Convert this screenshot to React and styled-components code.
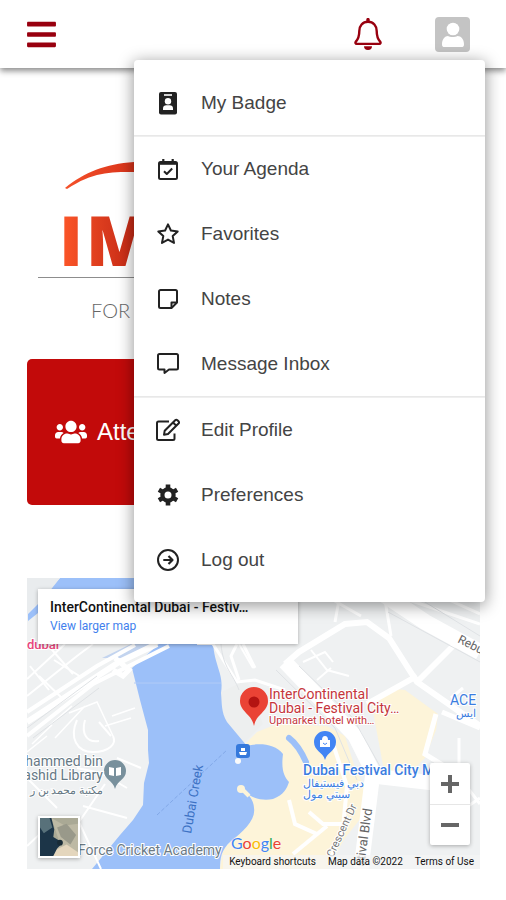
import styled, { createGlobalStyle } from "styled-components";
import { FaBars, FaUsers } from "react-icons/fa";

const BadgeIcon = () => (
  <Glyph viewBox="0 0 24 24">
    <path
      d="M5 1H19A2 2 0 0 1 21 3V21.500A2 2 0 0 1 19 23.500H5A2 2 0 0 1 3 21.500V3A2 2 0 0 1 5 1Z"
      fill="currentColor"
      stroke="none"
    />
    <path d="M8 4H16" stroke="#fff" strokeWidth="1.600" />
    <circle cx="12" cy="10.300" r="3.200" fill="#fff" stroke="none" />
    <path d="M7 19V17.200C7 15.400 8.500 14.200 10.200 14.200H13.800C15.500 14.200 17 15.400 17 17.200V19Z" fill="#fff" stroke="none" />
  </Glyph>
);

const AgendaIcon = () => (
  <Glyph viewBox="0 0 24 24">
    <rect x="3" y="5" width="18" height="17" rx="1.500" />
    <path d="M3 6.500H21" strokeWidth="2.600" />
    <path d="M7.300 2V6M16.700 2V6" strokeWidth="2.200" />
    <path d="M8 14.200L10.800 17L16.200 11.500" />
  </Glyph>
);

const StarIcon = () => (
  <Glyph viewBox="0 0 24 24">
    <path d="M12 2.300L14.900 8.500L21.700 9.400L16.700 14.100L18 20.900L12 17.600L6 20.900L7.300 14.100L2.300 9.400L9.100 8.500Z" />
  </Glyph>
);

const NotesIcon = () => (
  <Glyph viewBox="0 0 24 24">
    <path d="M21 15.500L15.500 21H4.500A1.500 1.500 0 0 1 3 19.500V4.500A1.500 1.500 0 0 1 4.500 3H19.500A1.500 1.500 0 0 1 21 4.500Z" />
    <path d="M15.500 21V15.500H21" />
  </Glyph>
);

const InboxIcon = () => (
  <Glyph viewBox="0 0 24 24">
    <path d="M3.500 2H20.500A1.500 1.500 0 0 1 22 3.500V16A1.500 1.500 0 0 1 20.500 17.500H13L8.500 21V17.500H3.500A1.500 1.500 0 0 1 2 16V3.500A1.500 1.500 0 0 1 3.500 2Z" />
  </Glyph>
);

const EditIcon = () => (
  <Glyph viewBox="0 0 24 24">
    <path d="M13 3.500H2.500A1.500 1.500 0 0 0 1 5V20.500A1.500 1.500 0 0 0 2.500 22H17A1.500 1.500 0 0 0 18.500 20.500V15.500" />
    <path d="M19.200 2.200A1.600 1.600 0 0 1 21.400 2.200L22.500 3.300A1.600 1.600 0 0 1 22.500 5.500L12 16L8 16.800L8.700 12.700ZM17 4.500L20.300 7.800" />
  </Glyph>
);

const GearIcon = () => (
  <Glyph viewBox="0 0 24 24">
    <circle cx="12" cy="12" r="5.600" strokeWidth="4.200" />
    <path
      d="M12 5V1.500M12 19V22.500M18.100 8.500L21.100 6.800M5.900 15.500L2.900 17.200M18.100 15.500L21.100 17.200M5.900 8.500L2.900 6.800"
      strokeWidth="4.600"
      strokeLinecap="butt"
    />
  </Glyph>
);

const LogoutIcon = () => (
  <Glyph viewBox="0 0 24 24">
    <circle cx="12" cy="12" r="10" />
    <path d="M7.300 12H16.300M12.500 8L16.500 12L12.500 16" strokeWidth="2.200" />
  </Glyph>
);

const BellIcon = () => (
  <svg viewBox="0 0 28 32" width="28" height="32" aria-hidden="true">
    <path
      d="M14 3.800C8.500 3.800 5.300 8 5.300 13C5.300 19.500 3.800 21.500 1.900 23.600C1 24.700 1.500 25.900 2.700 25.900H25.300C26.500 25.900 27 24.700 26.100 23.600C24.200 21.500 22.700 19.500 22.700 13C22.700 8 19.500 3.800 14 3.800Z"
      fill="none"
      stroke="currentColor"
      strokeWidth="2.400"
    />
    <path d="M12.300 4V1.600A1.700 1.700 0 0 1 15.700 1.600V4Z" fill="currentColor" />
    <path d="M10 28.300H18A4 3.700 0 0 1 10 28.300Z" fill="currentColor" />
  </svg>
);

const menuGroups = [
  [{ label: "My Badge", icon: <BadgeIcon /> }],
  [
    { label: "Your Agenda", icon: <AgendaIcon /> },
    { label: "Favorites", icon: <StarIcon /> },
    { label: "Notes", icon: <NotesIcon /> },
    { label: "Message Inbox", icon: <InboxIcon /> },
  ],
  [
    { label: "Edit Profile", icon: <EditIcon /> },
    { label: "Preferences", icon: <GearIcon /> },
    { label: "Log out", icon: <LogoutIcon /> },
  ],
];

const App = () => {
  return (
    <Page>
      <GlobalStyle />
      <Header>
        <IconButton aria-label="Open navigation">
          <FaBars size={33} />
        </IconButton>
        <Actions>
          <IconButton aria-label="Notifications">
            <BellIcon />
          </IconButton>
          <IconButton aria-label="Account" aria-expanded="true">
            <Avatar />
          </IconButton>
        </Actions>
        <Menu aria-label="Account">
          {menuGroups.map((group) => (
            <Group key={group[0].label}>
              {group.map((item) => (
                <li key={item.label}>
                  <MenuItem>
                    {item.icon}
                    {item.label}
                  </MenuItem>
                </li>
              ))}
            </Group>
          ))}
        </Menu>
      </Header>
      <Main>
        <Logo />
        <Card href="#attendees">
          <FaUsers size={32} />
          Attendees
        </Card>
        <VenueMap />
      </Main>
    </Page>
  );
};

export default App;

const Avatar = () => (
  <svg viewBox="0 0 35 35" width="35" height="35" aria-hidden="true">
    <rect width="35" height="35" rx="4" fill="#c4c4c4" />
    <circle cx="18" cy="12" r="6.300" fill="#fff" />
    <path
      d="M7 27.500C7 22 10 19 13 19C15 20.300 20 20.300 22.500 19C26 19 29 22 29 27.500C29 29.500 28 30 26.500 30H9.500C8 30 7 29.500 7 27.500Z"
      fill="#fff"
    />
  </svg>
);

const Logo = () => (
  <LogoArt viewBox="0 0 453 175" role="img" aria-label="Event logo">
    <defs>
      <linearGradient id="arc" x1="39" x2="107" y1="0" y2="0" gradientUnits="userSpaceOnUse">
        <stop offset="0" stopColor="#f4512a" />
        <stop offset="1" stopColor="#d9331a" />
      </linearGradient>
      <linearGradient id="ink" x1="36" x2="120" y1="0" y2="0" gradientUnits="userSpaceOnUse">
        <stop offset="0" stopColor="#fb5528" />
        <stop offset="0.5" stopColor="#d93a1d" />
        <stop offset="1" stopColor="#bf2413" />
      </linearGradient>
    </defs>
    <path d="M38 38C58 22 78 14 107 12L130 12V22H107C82 22 66 22 40 39Z" fill="url(#arc)" />
    <LogoName y="116">
      <tspan x="32">I</tspan>
      <tspan x="59">M</tspan>
    </LogoName>
    <path d="M11 127.500H140" stroke="#8d8d8d" />
    <LogoTag x="64" y="168">FOR</LogoTag>
  </LogoArt>
);

const VenueMap = () => (
  <MapFrame>
    <MapArt viewBox="0 0 453 291" preserveAspectRatio="xMinYMin slice" aria-hidden="true">
      <rect width="453" height="291" fill="#eff1f2" />

      {/* festival district */}
      <path
        d="M216 168L230 154L250 146L300 148L318 158L328 190L340 214L334 240L318 260L300 291H193L196 272L226 240L218 214Z"
        fill="#fdf4d9"
      />
      <path d="M345 128L367 111L378 112L411 136L409 152L398 180L384 194L358 198Z" fill="#fdf4d9" />
      <path d="M186 118L220 102L236 146L216 166L200 144Z" fill="#edefef" />

      {/* creek */}
      <path
        d="M133 65L105 90L113 122L121 152V172L122 185L117 205L116 227L106 242L93 257L65 291H193C193 280 194 272 204 263C216 254 229 242 227 230C227 222 220 214 215 211C224 221 236 223 246 221C257 217 260 210 262 204C257 198 254 192 256 176C248 165 230 165 220 168L200 144C194 134 195 125 194 115C197 95 188 90 186 65Z"
        fill="#9cc0f9"
      />
      <path d="M33 0H453V12H22ZM11 26V35L1 43V36Z" fill="#9cc0f9" />
      <path d="M22 14L0 36V0H33Z" fill="#e9ecee" />
      <path d="M262 160C270 166 275 175 279 184" stroke="#9cc0f9" strokeWidth="6" strokeLinecap="round" fill="none" />
      <path d="M107 105H194" stroke="#b1cbf7" fill="none" />
      <path d="M130 237L200 172" stroke="#82a8e8" strokeDasharray="4 2" />
      <path d="M215 211L222 218" stroke="#fdf4d9" strokeWidth="4" />
      <circle cx="211" cy="183" r="3" fill="#fafafa" />
      <circle cx="214" cy="211" r="4" fill="#fdf4d9" />
      <path d="M123 66L97 80L75 80L104 66Z" fill="#c3d4ef" />

      {/* west bank streets */}
      <g fill="none" stroke="#fff">
        <path d="M0 144L92 84L130 66" strokeWidth="6" />
        <path d="M0 158L66 106L142 68" strokeWidth="4" />
        <path d="M0 134L70 88L108 67" strokeWidth="4" />
        <path d="M0 118L50 78L66 66M12 98L36 121M3 88L22 112M27 82L54 99M20 66L46 96M0 101L38 66" strokeWidth="2" />
        <path d="M42 135L70 124L86 158M28 160L58 128M85 138L108 130M78 148L104 140M22 148L45 128M5 166L25 147M0 174L20 158" strokeWidth="1.500" />
        <path d="M50 142C42 160 50 174 66 174C82 174 90 166 86 158M58 142C54 156 60 165 72 163M72 144L84 158" strokeWidth="2" />
        <path d="M50 190L74 195L100 210M78 206L52 244L74 291M56 228L100 240M0 268L30 240M0 200L30 230M90 180L114 190" strokeWidth="2" />
        <path d="M88 80L102 92L96 98L86 92" strokeWidth="5" />
      </g>

      {/* east bank streets */}
      <g fill="none" stroke="#fff">
        <path d="M186 66L210 104L228 102L258 112M210 66L204 78L212 102M216 66L228 90" strokeWidth="3" />
        <path d="M258 86L272 74L318 46L340 44L362 60L390 104L453 148" strokeWidth="6" />
        <path d="M258 84L300 128L328 158L346 194L334 291" strokeWidth="15" />
        <path d="M306 22L334 38M358 22L364 58M312 22L308 44" strokeWidth="3" />
        <path d="M350 12L398 44L453 74" strokeWidth="16" />
        <path d="M376 20L453 46M400 12L453 36" strokeWidth="3" />
        <path d="M390 104L436 58M340 126L390 98" strokeWidth="6" />
        <path d="M346 198L416 206" strokeWidth="15" />
        <path d="M409 136L398 176L430 196M453 150L415 134" strokeWidth="5" />
        <path d="M284 72L300 92L322 98M276 84L298 74L306 84M304 90L290 102" strokeWidth="2" />
        <path d="M262 222L268 246L290 256M282 234L296 246L318 246M266 276L300 248M304 160L320 208L316 250L304 280" strokeWidth="4" />
        <path d="M436 110L424 120M430 196L453 226M424 240L453 220M432 160V190" strokeWidth="3" />
        <path d="M212 66L226 90M170 66L186 66" strokeWidth="2" />
      </g>
      <g fill="none" stroke="#dfe2e5">
        <path d="M249 92L308 150L330 202M272 88L326 140L354 190M361 34L453 84M372 8L453 58" />
        <path d="M194 66C196 90 206 96 212 112M0 150L70 98M6 160L72 110" />
      </g>

      <g transform="translate(227 148)" fill="#ea4335">
        <path d="M0 0C-2 -12 -14 -14 -14 -25A14 14 0 0 1 14 -25C14 -14 2 -12 0 0Z" />
        <circle cy="-24" r="5.500" fill="#b31412" />
      </g>
      <g transform="translate(298 182)" fill="#4285f4">
        <path d="M0 0C-2 -8 -11 -9 -11 -18A11 11 0 0 1 11 -18C11 -9 2 -8 0 0Z" />
        <path d="M-5 -20H5V-13H-5ZM-3 -20A3 4 0 0 1 3 -20Z" fill="#fff" />
        <path d="M-2 -17Q0 -14 2 -17" stroke="#4285f4" fill="none" />
      </g>
      <g transform="translate(88 211)" fill="#78909c">
        <path d="M0 0C-2 -9 -11 -9 -11 -18A11 11 0 0 1 11 -18C11 -9 2 -9 0 0Z" />
        <path d="M-6 -22L-1 -21V-13L-6 -14ZM6 -22L1 -21V-13L6 -14Z" fill="#fff" />
      </g>
      <g transform="translate(209 166)">
        <rect width="14" height="14" rx="3" fill="#3579dc" />
        <path d="M3 8H11L10 11H4ZM5 4H9V7H5Z" fill="#fff" />
      </g>

      <Label x="242" y="121" $color="#c5363c" $size={14}>InterContinental</Label>
      <Label x="242" y="135" $color="#c5363c" $size={14}>Dubai - Festival City…</Label>
      <Label x="242" y="146" $color="#c5363c" $size={11}>Upmarket hotel with…</Label>
      <Label x="276" y="197" $color="#3b7de0" $size={14} $weight={500}>Dubai Festival City M</Label>
      <Label x="276" y="209" $color="#3b7de0" $size={11}>دبي فيستيفال</Label>
      <Label x="276" y="220" $color="#3b7de0" $size={11}>سيتي مول</Label>
      <Label x="423" y="127" $color="#3b7de0" $size={14}>ACE</Label>
      <Label x="429" y="139" $color="#3b7de0" $size={11}>ايس</Label>
      <Label x="76" y="188" textAnchor="end" $color="#667985" $size={14}>hammed bin</Label>
      <Label x="76" y="202" textAnchor="end" $color="#667985" $size={14}>ashid Library</Label>
      <Label x="3" y="216" $color="#667985" $size={11}>مكتبة محمد بن ر</Label>
      <Label x="0" y="71" $color="#e8467c" $weight={500}>dubai</Label>
      <Label x="51" y="277" $color="#6b7a85" $size={14}>Force Cricket Academy</Label>
      <Label transform="translate(164 256) rotate(-80)" $color="#3c72c4" $plain>Dubai Creek</Label>
      <Label transform="translate(430 64) rotate(27)" $color="#666" $size={12}>Rebu</Label>
      <Label transform="translate(306 280) rotate(-65)" $color="#777" $size={11}>Crescent Dr</Label>
      <Label transform="translate(337 289) rotate(-82)" $color="#666">stival Blvd</Label>
    </MapArt>
    <PlaceCard>
      <PlaceName>InterContinental Dubai - Festiv…</PlaceName>
      <PlaceLink href="#map">View larger map</PlaceLink>
    </PlaceCard>
    <Satellite aria-label="Show satellite imagery">
      <svg viewBox="0 0 40 40" width="100%" height="100%">
        <rect width="40" height="40" fill="#aaa995" />
        <path d="M12 0L26 8L40 6V40H14L20 24Z" fill="#bdb9a4" />
        <path d="M18 10L28 6L38 18L32 28L22 20Z" fill="#99998a" />
        <path d="M16 34L28 28L40 36V40H12Z" fill="#e4d6bd" />
        <path d="M0 0H12L15 12L14 20L24 26L18 32L14 40H0Z" fill="#1c3548" />
        <path d="M0 0H10L13 10L4 16L0 10Z" fill="#58717a" />
        <circle cx="21" cy="26" r="3" fill="#182b36" />
      </svg>
    </Satellite>
    <Zoom>
      <ZoomButton aria-label="Zoom in">
        <svg viewBox="0 0 18 18" width="18" height="18">
          <path d="M0 9H18M9 0V18" stroke="#666" strokeWidth="4" />
        </svg>
      </ZoomButton>
      <ZoomButton aria-label="Zoom out">
        <svg viewBox="0 0 18 18" width="18" height="18">
          <path d="M0 9H18" stroke="#666" strokeWidth="4" />
        </svg>
      </ZoomButton>
    </Zoom>
    <Google href="#google" aria-label="Google">
      <Letter $color="#4285f4">G</Letter>
      <Letter $color="#ea4335">o</Letter>
      <Letter $color="#fbbc05">o</Letter>
      <Letter $color="#4285f4">g</Letter>
      <Letter $color="#34a853">l</Letter>
      <Letter $color="#ea4335">e</Letter>
    </Google>
    <Credits>
      <CreditButton>Keyboard shortcuts</CreditButton>
      <span>Map data ©2022</span>
      <CreditLink href="#terms">Terms of Use</CreditLink>
    </Credits>
  </MapFrame>
);

const GlobalStyle = createGlobalStyle`
  * {
    box-sizing: border-box;
  }

  body {
    margin: 0;
    background-color: #fff;
    font-family: "Liberation Sans", Arial, sans-serif;
  }

  button {
    padding: 0;
    border: 0;
    background: none;
    font: inherit;
    cursor: pointer;
  }

  svg {
    display: block;
  }
`;

const Page = styled.div`
  overflow-x: hidden;
`;

const Header = styled.header`
  position: relative;
  z-index: 1;
  display: flex;
  align-items: center;
  justify-content: space-between;
  height: 68px;
  padding: 0 36px 0 25px;
  background-color: #fff;
  box-shadow: 0 3px 6px rgba(0, 0, 0, 0.45);
`;

const Actions = styled.div`
  display: flex;
  align-items: center;
  gap: 53px;
`;

const IconButton = styled.button`
  color: #98000f;
`;

const Menu = styled.nav`
  position: absolute;
  top: 60px;
  right: 21px;
  left: 134px;
  padding: 10px 0;
  border-radius: 4px;
  background-color: #fff;
  box-shadow: 0 3px 16px 1px rgba(0, 0, 0, 0.4);
`;

const Group = styled.ul`
  margin: 0;
  padding: 0;
  list-style: none;

  &:not(:last-child) {
    border-bottom: 1px solid #e8e8e8;
    box-shadow: 0 1px #efefef;
  }
`;

const MenuItem = styled.button`
  display: flex;
  align-items: center;
  gap: 21px;
  width: 100%;
  height: 65px;
  padding: 0 22px;
  color: #444;
  font-size: 19px;
  text-align: left;
`;

const Glyph = styled.svg`
  flex-shrink: 0;
  width: 24px;
  height: 24px;
  color: #222;
  fill: none;
  stroke: currentColor;
  stroke-width: 2px;
  stroke-linejoin: round;
`;

const Main = styled.main`
  display: flex;
  flex-direction: column;
  padding: 82px 26px 20px 27px;
`;

const LogoArt = styled.svg`
  width: 100%;
`;

const LogoName = styled.text`
  fill: url(#ink);
  font-family: "Open Sans", sans-serif;
  font-size: 69px;
  font-weight: 800;
`;

const LogoTag = styled.text`
  fill: #666;
  font-family: Lato, sans-serif;
  font-size: 20px;
  font-weight: 300;
`;

const Card = styled.a`
  display: flex;
  align-items: center;
  gap: 10px;
  height: 146px;
  margin: 34px 0 73px;
  padding: 0 28px;
  border-radius: 5px;
  background-color: #c20a0a;
  color: #fff;
  font-size: 24px;
  text-decoration: none;
`;

const MapFrame = styled.section`
  position: relative;
  height: 291px;
  overflow: hidden;
  font-family: Roboto, sans-serif;
`;

const MapArt = styled.svg`
  width: 100%;
  height: 100%;
`;

const Label = styled.text`
  fill: ${(props) => props.$color};
  stroke: ${(props) => (props.$plain ? "none" : "#fff")};
  stroke-width: 2px;
  paint-order: stroke;
  font-size: ${(props) => props.$size || 13}px;
  font-weight: ${(props) => props.$weight || 400};
`;

const PlaceCard = styled.div`
  position: absolute;
  top: 11px;
  left: 11px;
  width: 260px;
  padding: 9px 12px 8px;
  background-color: #fff;
  box-shadow: 0 1px 4px rgba(0, 0, 0, 0.3);
`;

const PlaceName = styled.p`
  margin: 0;
  color: #111;
  font-size: 14px;
  font-weight: 500;
  line-height: 18px;
  white-space: nowrap;
`;

const PlaceLink = styled.a`
  display: block;
  color: #427fed;
  font-size: 12px;
  line-height: 20px;
  text-decoration: none;
`;

const Satellite = styled.button`
  position: absolute;
  bottom: 11px;
  left: 11px;
  width: 42px;
  height: 42px;
  border: 2px solid #fff;
  box-shadow: 0 1px 4px rgba(0, 0, 0, 0.3);
`;

const Zoom = styled.div`
  position: absolute;
  right: 10px;
  bottom: 24px;
  width: 40px;
  background-color: #fff;
  border-radius: 2px;
  box-shadow: 0 1px 4px rgba(0, 0, 0, 0.3);
`;

const ZoomButton = styled.button`
  display: flex;
  align-items: center;
  justify-content: center;
  width: 100%;
  height: 41px;

  & + & {
    border-top: 1px solid #e6e6e6;
  }
`;

const Google = styled.a`
  position: absolute;
  bottom: 15px;
  left: 204px;
  font-family: Lato, sans-serif;
  font-size: 16px;
  font-weight: 400;
  line-height: 22px;
  text-decoration: none;
  text-shadow: 0 0 2px #fff;
`;

const Letter = styled.span`
  color: ${(props) => props.$color};
`;

const Credits = styled.div`
  position: absolute;
  right: 0;
  bottom: 0;
  display: flex;
  gap: 12px;
  height: 14px;
  padding: 0 6px;
  background-color: rgba(245, 245, 245, 0.7);
  color: #111;
  font-size: 10px;
  line-height: 14px;
  white-space: nowrap;
`;

const CreditButton = styled.button`
  color: inherit;
`;

const CreditLink = styled.a`
  color: inherit;
  text-decoration: none;
`;
